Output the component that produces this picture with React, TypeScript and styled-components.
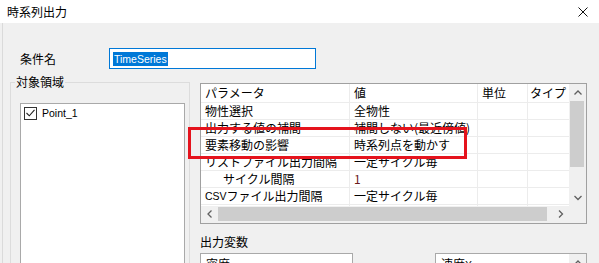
import React from 'react';
import styled, { createGlobalStyle } from 'styled-components';

interface ParamRow {
  name: React.ReactNode;
  value: string;
  indent?: boolean;
  numeric?: boolean;
}

const Latin = styled.span`
  font-family: "Liberation Sans", Arial, sans-serif;
  font-size: 10.5px;
`;

const rows: ParamRow[] = [
  { name: '物性選択', value: '全物性' },
  { name: '出力する値の補間', value: '補間しない(最近傍値)' },
  { name: '要素移動の影響', value: '時系列点を動かす' },
  { name: 'リストファイル出力間隔', value: '一定サイクル毎' },
  { name: 'サイクル間隔', value: '1', indent: true, numeric: true },
  {
    name: (
      <>
        <Latin>CSV</Latin>ファイル出力間隔
      </>
    ),
    value: '一定サイクル毎',
  },
  { name: 'サイクル間隔', value: '1', indent: true, numeric: true },
];

const GlobalStyle = createGlobalStyle`
  html, body {
    margin: 0;
    padding: 0;
    background: #f0f0f0;
  }
  body {
    font-family: "Noto Sans CJK JP", "Noto Sans", sans-serif;
    font-size: 12px;
    color: #000;
  }
`;

const Window = styled.div`
  width: 599px;
  height: 263px;
  overflow: hidden;
  display: flex;
  flex-direction: column;
  background: #f0f0f0;
`;

const TitleBar = styled.div`
  flex: none;
  height: 23px;
  background: #fff;
  display: flex;
  align-items: center;
  justify-content: space-between;
  padding: 0 11px 0 7px;
`;

const Title = styled.span`
  font-size: 12px;
  line-height: 16px;
`;

const Body = styled.div`
  flex: 1;
  margin-left: 2px;
  border-left: 1px solid #dadada;
  padding-top: 25px;
  display: flex;
  flex-direction: column;
`;

const NameRow = styled.div`
  display: flex;
  align-items: center;
  height: 21px;
`;

const Label = styled.span<{ $width?: number }>`
  flex: none;
  width: ${(p) => (p.$width ? `${p.$width}px` : 'auto')};
  line-height: 16px;
`;

const NameLabel = styled(Label)`
  margin-left: 17px;
`;

const TextInput = styled.div`
  box-sizing: border-box;
  width: 207px;
  height: 21px;
  border: 1px solid #0078d7;
  background: #fff;
  display: flex;
  align-items: center;
  padding-left: 3px;
`;

const Selected = styled(Latin)`
  background: #0078d7;
  color: #fff;
  line-height: 14px;
  padding: 0 1px;
`;

const MainRow = styled.div`
  display: flex;
  margin-top: 6px;
  align-items: flex-start;
`;

const GroupBox = styled.fieldset`
  box-sizing: border-box;
  width: 180px;
  height: 220px;
  margin: 0 0 0 7px;
  padding: 0 4px 0 9px;
  border: 1px solid #dcdcdc;
  min-width: 0;
`;

const Legend = styled.legend`
  padding: 0 1px;
  margin-left: -5px;
  line-height: 14px;
`;

const ListBox = styled.div<{ $width: number }>`
  box-sizing: border-box;
  width: ${(p) => p.$width}px;
  height: 200px;
  background: #fff;
  border: 1px solid #a9a9a9;
  position: relative;
`;

const TargetList = styled(ListBox)`
  margin-top: 14px;
  padding: 2px 3px;
`;

const CheckItem = styled.div`
  display: flex;
  align-items: center;
  gap: 5px;
  height: 14px;
`;

const CheckBox = styled.span`
  box-sizing: border-box;
  width: 13px;
  height: 13px;
  border: 1px solid #333;
  display: flex;
  align-items: center;
  justify-content: center;
`;

const ItemText = styled(Latin)`
  line-height: 14px;
`;

const RightColumn = styled.div`
  margin-left: 10px;
  padding-top: 8px;
  width: 387px;
  position: relative;
`;

const Grid = styled.div`
  box-sizing: border-box;
  width: 387px;
  height: 141px;
  border: 1px solid #a0a0a0;
  background: #fff;
  display: flex;
  flex-direction: column;
`;

const GridTop = styled.div`
  display: flex;
  height: 122px;
`;

const Table = styled.div`
  width: 368px;
  height: 122px;
  overflow: hidden;
`;

const Row = styled.div<{ $header?: boolean }>`
  display: grid;
  grid-template-columns: 148px 128px 50px 42px;
  height: ${(p) => (p.$header ? 19 : 17)}px;
  box-sizing: border-box;
  border-bottom: 1px solid #ececec;
`;

const Cell = styled.div<{ $indent?: boolean; $numeric?: boolean; $pad?: number }>`
  display: flex;
  align-items: center;
  padding-left: ${(p) => (p.$indent ? 22 : p.$pad ?? 4)}px;
  border-left: 1px solid #ececec;
  white-space: nowrap;
  overflow: hidden;
  line-height: 16px;
  color: ${(p) => (p.$numeric ? '#6a1b1b' : '#000')};
  &:first-child {
    border-left: none;
  }
`;

const VScroll = styled.div`
  width: 17px;
  height: 122px;
  background: #f0f0f0;
  display: flex;
  flex-direction: column;
`;

const ArrowButton = styled.div<{ $w: number; $h: number }>`
  flex: none;
  width: ${(p) => p.$w}px;
  height: ${(p) => p.$h}px;
  display: flex;
  align-items: center;
  justify-content: center;
`;

const VThumb = styled.div`
  height: 66px;
  margin: 0 2px 0 1px;
  background: #cdcdcd;
`;

const VSpacer = styled.div`
  flex: 1;
`;

const HScroll = styled.div`
  height: 17px;
  background: #f0f0f0;
  display: flex;
  align-items: stretch;
`;

const HThumb = styled.div`
  width: 329px;
  margin: 1px 0 2px 0;
  background: #cdcdcd;
`;

const HSpacer = styled.div`
  flex: 1;
`;

const Highlight = styled.div`
  position: absolute;
  left: -12px;
  top: 52px;
  width: 279px;
  height: 32px;
  box-sizing: border-box;
  border: 3px solid #e5131d;
  pointer-events: none;
`;

const SectionLabel = styled(Label)`
  display: block;
  margin-top: 10px;
`;

const VarLists = styled.div`
  display: flex;
  justify-content: space-between;
  margin-top: 3px;
`;

const VarList = styled(ListBox)`
  padding: 1px 5px;
`;

const ListScroll = styled.div`
  position: absolute;
  right: 0;
  top: 0;
  width: 17px;
  height: 100%;
  background: #f0f0f0;
  display: flex;
  justify-content: center;
  padding-top: 6px;
  box-sizing: border-box;
`;

type Dir = 'up' | 'down' | 'left' | 'right';

const Chevron = ({ dir }: { dir: Dir }) => {
  const pts: Record<Dir, string> = {
    up: '0.5,4.5 4,1 7.5,4.5',
    down: '0.5,1 4,4.5 7.5,1',
    left: '4.5,0.5 1,4 4.5,7.5',
    right: '1,0.5 4.5,4 1,7.5',
  };
  const horizontal = dir === 'left' || dir === 'right';
  return (
    <svg width={horizontal ? 6 : 8} height={horizontal ? 8 : 6} viewBox={horizontal ? '0 0 6 8' : '0 0 8 6'}>
      <polyline points={pts[dir]} fill="none" stroke="#606060" strokeWidth="1.3" />
    </svg>
  );
};

const App = () => {
  return (
    <>
      <GlobalStyle />
      <Window>
        <TitleBar>
          <Title>時系列出力</Title>
          <svg width="10" height="10" viewBox="0 0 10 10">
            <path d="M0.5 0.5 L9.5 9.5 M9.5 0.5 L0.5 9.5" stroke="#111" strokeWidth="1" />
          </svg>
        </TitleBar>
        <Body>
          <NameRow>
            <NameLabel $width={89}>条件名</NameLabel>
            <TextInput>
              <Selected>TimeSeries</Selected>
            </TextInput>
          </NameRow>
          <MainRow>
            <GroupBox>
              <Legend>対象領域</Legend>
              <TargetList $width={165}>
                <CheckItem>
                  <CheckBox>
                    <svg width="9" height="8" viewBox="0 0 9 8">
                      <polyline points="0.5,4 3.3,6.8 8.5,0.8" fill="none" stroke="#222" strokeWidth="1.1" />
                    </svg>
                  </CheckBox>
                  <ItemText>Point_1</ItemText>
                </CheckItem>
              </TargetList>
            </GroupBox>
            <RightColumn>
              <Grid>
                <GridTop>
                  <Table>
                    <Row $header>
                      <Cell>パラメータ</Cell>
                      <Cell>値</Cell>
                      <Cell>単位</Cell>
                      <Cell $pad={2}>タイプ</Cell>
                    </Row>
                    {rows.map((r, i) => (
                      <Row key={i}>
                        <Cell $indent={r.indent}>{r.name}</Cell>
                        <Cell $numeric={r.numeric}>{r.value}</Cell>
                        <Cell />
                        <Cell />
                      </Row>
                    ))}
                  </Table>
                  <VScroll>
                    <ArrowButton $w={17} $h={17}>
                      <Chevron dir="up" />
                    </ArrowButton>
                    <VThumb />
                    <VSpacer />
                    <ArrowButton $w={17} $h={17}>
                      <Chevron dir="down" />
                    </ArrowButton>
                  </VScroll>
                </GridTop>
                <HScroll>
                  <ArrowButton $w={17} $h={16}>
                    <Chevron dir="left" />
                  </ArrowButton>
                  <HThumb />
                  <HSpacer />
                  <ArrowButton $w={17} $h={16}>
                    <Chevron dir="right" />
                  </ArrowButton>
                  <ArrowButton $w={17} $h={16} />
                </HScroll>
              </Grid>
              <Highlight />
              <SectionLabel>出力変数</SectionLabel>
              <VarLists>
                <VarList $width={153}>密度</VarList>
                <VarList $width={152}>
                  速度<Latin>X</Latin>
                  <ListScroll>
                    <Chevron dir="up" />
                  </ListScroll>
                </VarList>
              </VarLists>
            </RightColumn>
          </MainRow>
        </Body>
      </Window>
    </>
  );
};

export default App;
